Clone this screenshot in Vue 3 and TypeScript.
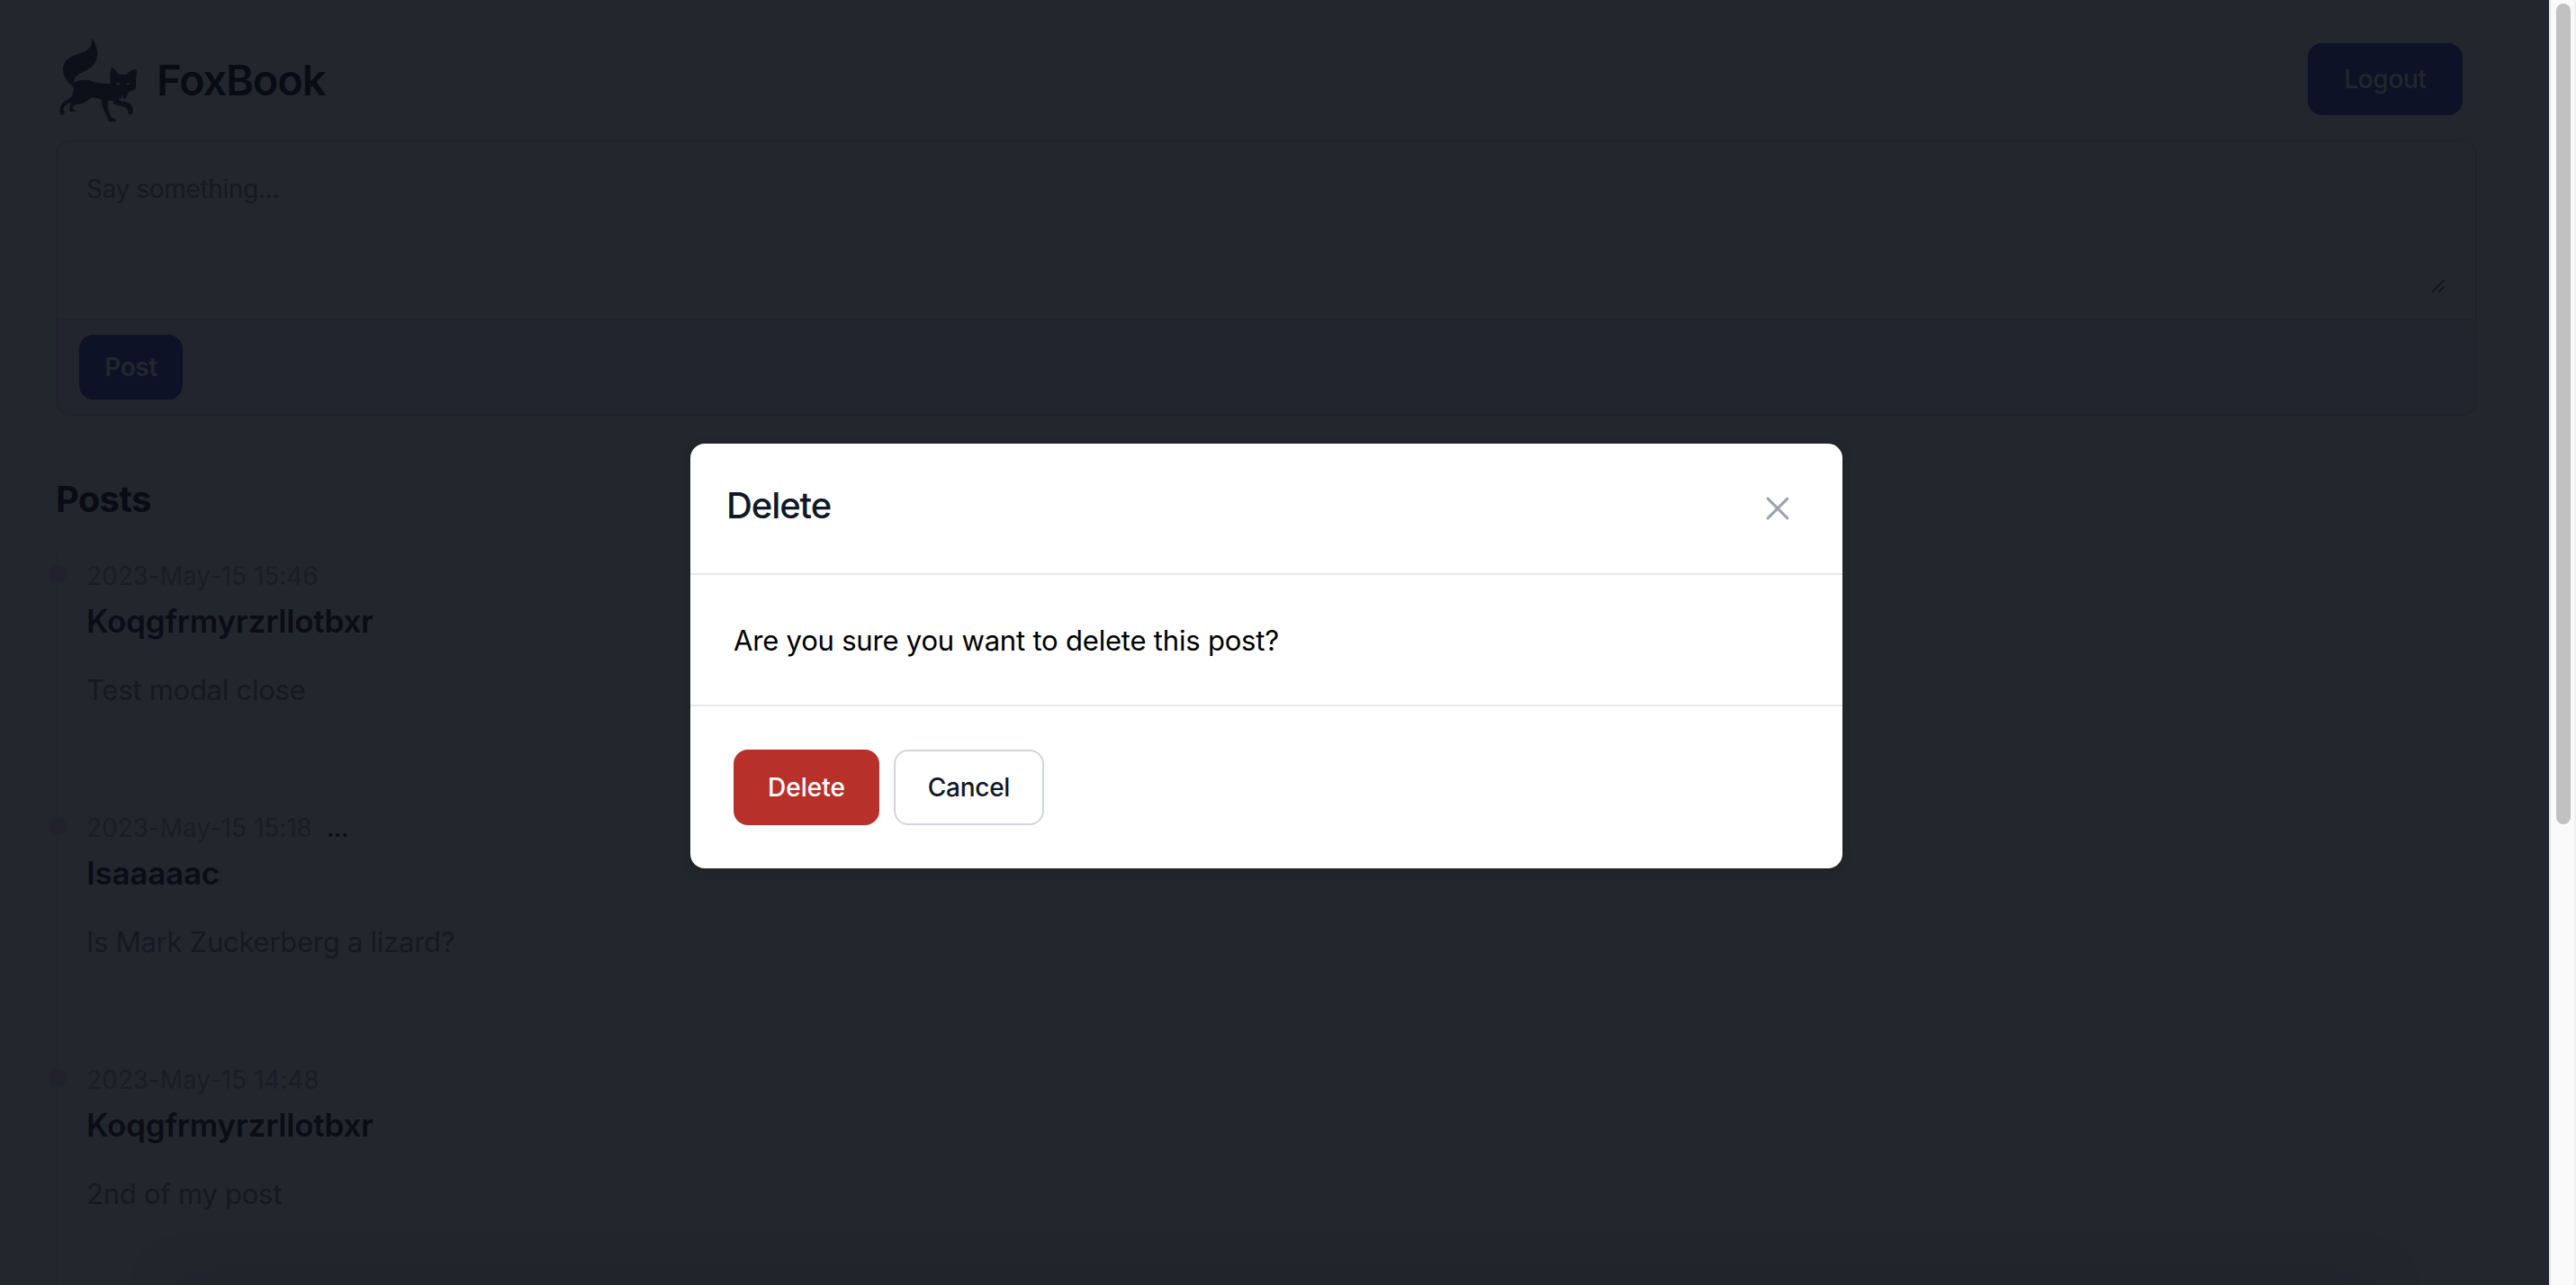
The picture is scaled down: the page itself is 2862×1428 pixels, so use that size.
<script setup lang="ts">
interface Post {
  id: number
  date: string
  author: string
  body: string
  own: boolean
}

const posts: Post[] = [
  { id: 1, date: '2023-May-15 15:46', author: 'Koqgfrmyrzrllotbxr', body: 'Test modal close', own: false },
  { id: 2, date: '2023-May-15 15:18', author: 'Isaaaaac', body: 'Is Mark Zuckerberg a lizard?', own: true },
  { id: 3, date: '2023-May-15 14:48', author: 'Koqgfrmyrzrllotbxr', body: '2nd of my post', own: false },
]
</script>

<template>
  <div class="screen">
    <main class="page">
      <header class="header">
        <div class="brand">
          <svg class="fox" viewBox="0 0 300 312" aria-hidden="true">
            <path
              class="fox-body"
              d="M128 19 C139 38 148 62 143 84 C138 112 114 124 90 136 C72 145 66 154 67 170 C76 158 96 156 118 160 C142 170 166 172 189 170 L187 160 C186 144 187 130 192 117 C202 122 211 131 215 140 L241 141 C249 131 262 124 275 123 C277 140 273 150 273 162 C274 175 273 184 270 190 C262 195 250 196 247 201 C246 210 240 218 235 223 C231 217 228 210 226 206 L225 223 C221 219 217 217 214 222 L222 229 C240 230 256 237 260 246 C264 256 264 266 262 274 L250 273 C245 268 249 257 239 250 C226 244 206 244 198 237 L200 229 C193 228 186 227 180 228 C177 247 182 268 191 283 C199 287 208 288 207 297 L183 297 C179 281 158 253 158 226 C148 220 134 215 122 219 C109 227 99 241 81 239 C72 239 63 245 61 252 C64 258 73 257 72 263 L53 264 C50 255 54 245 56 234 C43 236 33 247 31 258 C39 264 36 273 25 276 C16 270 18 247 29 235 C42 223 62 222 64 197 C67 188 66 182 59 177 C42 164 30 145 30 121 C32 87 64 76 92 68 C117 60 126 45 128 19 Z"
            />
            <path class="fox-eye" d="M207 169 C212 167 218 169 221 174 C213 176 208 174 207 169 Z M254 168 C248 167 242 169 240 173 C247 176 252 173 254 168 Z" />
          </svg>
          <h1 class="brand-name">FoxBook</h1>
        </div>
        <button class="btn btn-primary logout">Logout</button>
      </header>

      <section class="composer">
        <div class="composer-input">
          <span class="placeholder">Say something...</span>
          <svg class="grip" viewBox="0 0 16 16" aria-hidden="true">
            <path d="M1 14.5 L14.5 1 M8.5 14.5 L14.5 8.5" />
          </svg>
        </div>
        <div class="composer-foot">
          <button class="btn btn-primary post-btn">Post</button>
        </div>
      </section>

      <h2 class="posts-title">Posts</h2>
      <ol class="timeline">
        <li v-for="post in posts" :key="post.id" class="entry">
          <span class="dot"></span>
          <div class="meta">
            <time class="date">{{ post.date }}</time>
            <span v-if="post.own" class="more">...</span>
          </div>
          <h3 class="author">{{ post.author }}</h3>
          <p class="body">{{ post.body }}</p>
        </li>
      </ol>
    </main>

    <aside class="scrollbar"><div class="thumb"></div></aside>

    <div class="edge-shade"></div>

    <div class="overlay">
      <div class="modal" role="dialog">
        <div class="modal-head">
          <h3 class="modal-title">Delete</h3>
          <button class="close" aria-label="Close">
            <svg viewBox="0 0 24 24"><path d="M2 2 L22 22 M22 2 L2 22" /></svg>
          </button>
        </div>
        <div class="modal-body">Are you sure you want to delete this post?</div>
        <div class="modal-foot">
          <button class="btn btn-danger">Delete</button>
          <button class="btn btn-light">Cancel</button>
        </div>
      </div>
    </div>
  </div>
</template>

<style>
body {
  margin: 0;
  background: #22272e;
}
</style>

<style scoped>
.screen {
  position: relative;
  display: flex;
  width: 2862px;
  height: 1428px;
  overflow: hidden;
  background: #22272e;
  font-family: Inter, "Noto Sans", sans-serif;
}
h1, h2, h3, p, ol {
  margin: 0;
  padding: 0;
}
button {
  font-family: inherit;
  margin: 0;
  padding: 0;
  border: 0;
  background: none;
}
.page {
  box-sizing: border-box;
  width: 2832px;
  height: 1428px;
  padding: 0 80px 0 62px;
  overflow: hidden;
}
.header {
  box-sizing: border-box;
  display: flex;
  align-items: center;
  justify-content: space-between;
  height: 156px;
  padding: 20px 16px 0 0;
}
.brand {
  display: flex;
  align-items: center;
  margin-left: -2px;
}
.fox {
  width: 100px;
  height: 104px;
}
.fox-body {
  fill: #0c1019;
}
.fox-eye {
  fill: #22272e;
}
.brand-name {
  margin-left: 14px;
  padding-top: 2px;
  font-size: 47px;
  font-weight: 600;
  line-height: 60px;
  letter-spacing: -1.17px;
  color: #080c15;
}
.btn {
  box-sizing: border-box;
  border-radius: 16px;
  font-size: 28px;
  font-weight: 500;
  line-height: 40px;
  text-align: center;
}
.btn-primary {
  background: #0d1226;
  color: #22272d;
}
.logout {
  width: 172px;
  height: 80px;
  letter-spacing: -0.28px;
}
.post-btn {
  width: 115px;
  height: 72px;
  font-weight: 600;
  letter-spacing: -0.43px;
}
.composer {
  box-sizing: border-box;
  height: 306px;
  border: 2px solid #21222b;
  border-radius: 16px;
  overflow: hidden;
}
.composer-input {
  box-sizing: border-box;
  display: flex;
  align-items: flex-start;
  justify-content: space-between;
  height: 196px;
  padding: 32px 33px 28px 32px;
}
.placeholder {
  font-size: 28px;
  line-height: 40px;
  letter-spacing: -0.36px;
  color: #161921;
}
.grip {
  align-self: flex-end;
  width: 16px;
  height: 16px;
  fill: none;
  stroke: #11151d;
  stroke-width: 1.6;
}
.composer-foot {
  box-sizing: border-box;
  height: 106px;
  padding: 16px 24px;
  border-top: 2px solid #21222b;
  background: #22252d;
}
.posts-title {
  margin-top: 65px;
  font-size: 40px;
  font-weight: 700;
  line-height: 56px;
  letter-spacing: -0.75px;
  color: #090c15;
}
.timeline {
  margin-top: 31px;
  border-left: 2px solid #21232b;
  list-style: none;
}
.entry {
  position: relative;
  box-sizing: border-box;
  height: 280px;
  padding: 6px 0 0 32px;
}
.entry:last-child {
  height: 300px;
}
.dot {
  position: absolute;
  top: 12px;
  left: -12px;
  box-sizing: border-box;
  width: 24px;
  height: 24px;
  border: 2px solid #22272e;
  border-radius: 50%;
  background: #21222b;
}
.meta {
  display: flex;
  gap: 16px;
  height: 40px;
  font-size: 28px;
  line-height: 40px;
}
.date {
  letter-spacing: -0.04px;
  color: #1a1d25;
}
.more {
  font-weight: 500;
  letter-spacing: -0.4px;
  color: #0b0e16;
}
.author {
  margin-top: 8px;
  font-size: 35px;
  font-weight: 600;
  line-height: 44px;
  letter-spacing: -0.22px;
  color: #0a0d16;
}
.body {
  margin-top: 31px;
  font-size: 31px;
  line-height: 48px;
  letter-spacing: -0.25px;
  color: #151921;
}
.scrollbar {
  box-sizing: border-box;
  width: 30px;
  height: 1428px;
  padding: 4px 4px 0 6px;
  border-left: 2px solid #e8e8e8;
  border-right: 2px solid #f0f0f0;
  background: #fafafa;
}
.thumb {
  width: 16px;
  height: 912px;
  border-radius: 8px;
  background: #c1c1c1;
}
/* faint shade rising from below the bottom edge of the page */
.edge-shade {
  position: absolute;
  top: 1428px;
  left: 200px;
  width: 2432px;
  height: 60px;
  box-shadow: 0 0 50px rgba(32, 30, 38, 0.7);
}
.overlay {
  position: absolute;
  top: 0;
  left: 0;
  display: flex;
  align-items: center;
  justify-content: center;
  width: 2814px;
  height: 1458px;
}
.modal {
  width: 1280px;
  height: 472px;
  overflow: hidden;
  border-radius: 16px;
  background: #fff;
  box-shadow: 0 3px 8px rgba(28, 30, 20, 0.5);
}
.modal-head {
  box-sizing: border-box;
  display: flex;
  align-items: flex-start;
  justify-content: space-between;
  height: 146px;
  padding: 40px 52px 0 40px;
  border-bottom: 2px solid #e5e7eb;
}
.modal-title {
  margin-top: 1px;
  font-size: 40px;
  font-weight: 550;
  line-height: 56px;
  letter-spacing: -1.1px;
  color: #111827;
}
.close {
  display: flex;
  align-items: center;
  justify-content: center;
  width: 40px;
  height: 64px;
}
.close svg {
  width: 26px;
  height: 26px;
  fill: none;
  stroke: #9ca3af;
  stroke-width: 2.8;
  stroke-linecap: round;
}
.modal-body {
  box-sizing: border-box;
  height: 146px;
  padding: 49px 48px;
  border-bottom: 2px solid #e5e7eb;
  font-size: 31px;
  line-height: 48px;
  letter-spacing: -0.2px;
  color: #000;
}
.modal-foot {
  display: flex;
  gap: 16px;
  padding: 48px;
}
.btn-danger {
  width: 162px;
  height: 84px;
  background: #b7312a;
  color: #fff;
}
.btn-light {
  width: 167px;
  height: 84px;
  border: 2px solid #d1d5db;
  background: #fff;
  letter-spacing: -0.28px;
  color: #111827;
}
</style>
